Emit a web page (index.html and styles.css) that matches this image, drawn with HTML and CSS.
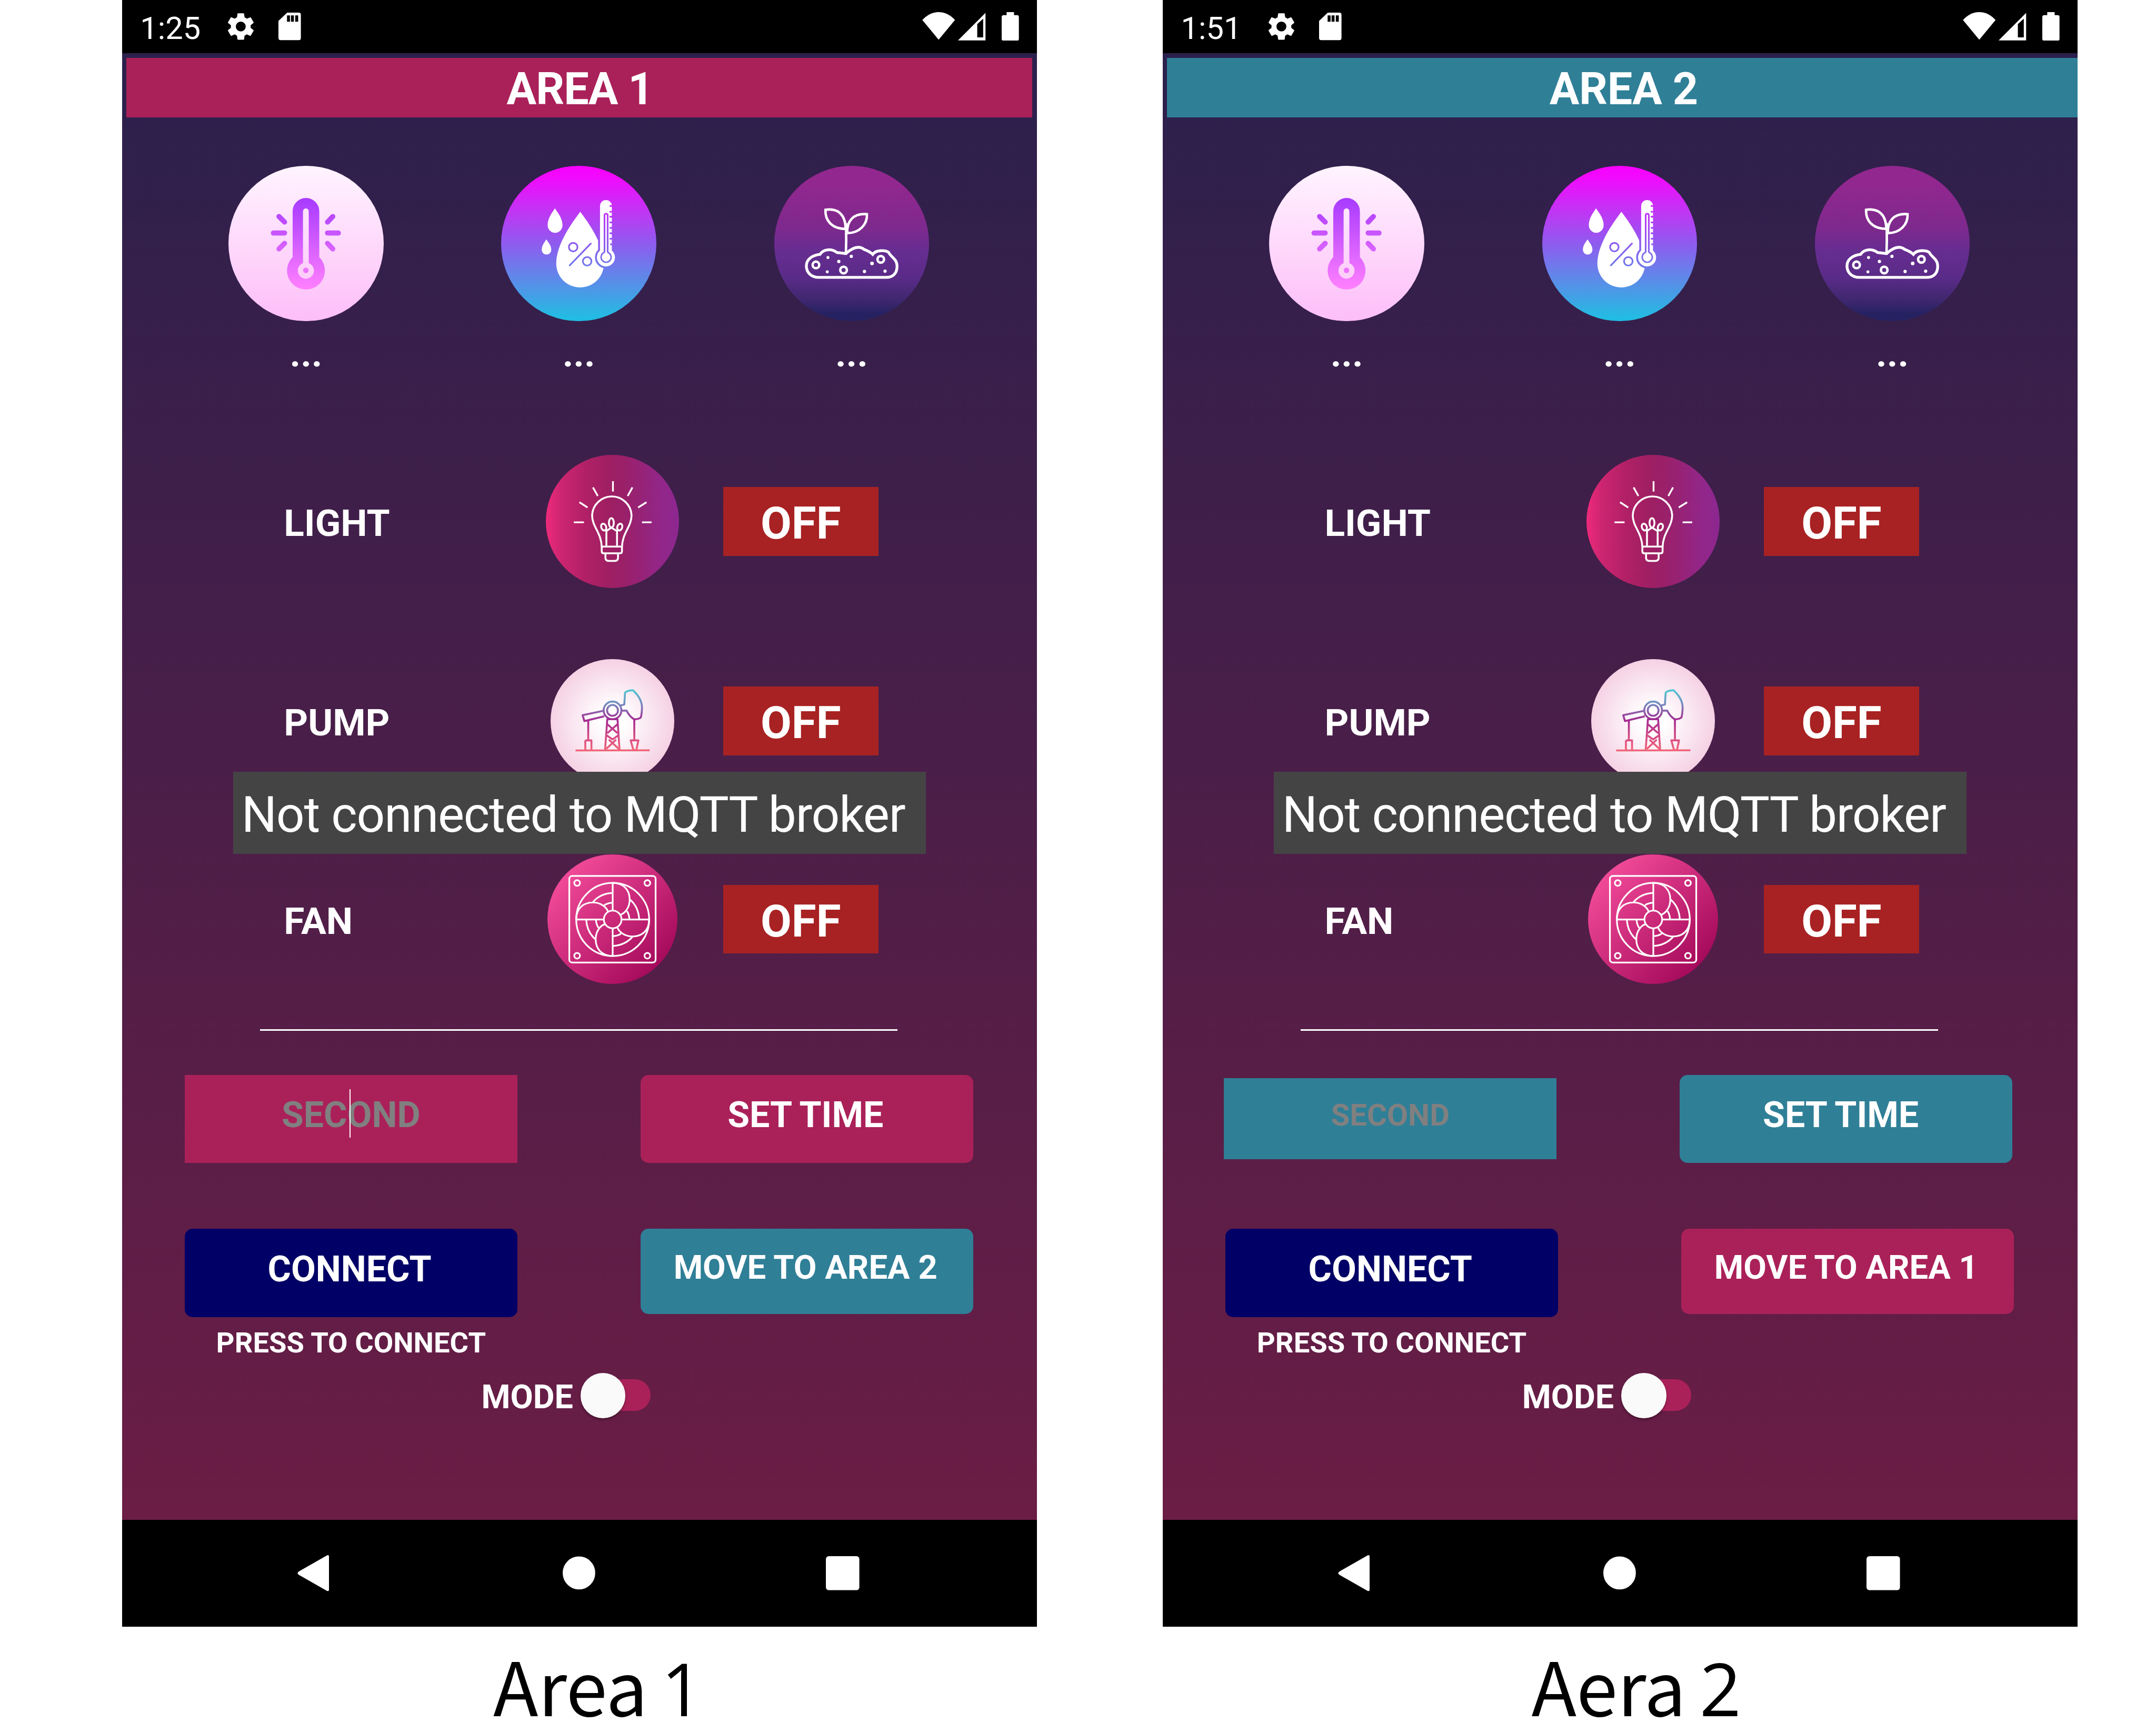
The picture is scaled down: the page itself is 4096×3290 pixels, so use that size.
FILE: index.html
```html
<!DOCTYPE html>
<html lang="en">
<head>
<meta charset="utf-8">
<title>Garden control</title>
<link rel="stylesheet" href="styles.css">
</head>
<body>
<svg class="defs" aria-hidden="true">
  <defs>
    <linearGradient id="heat" gradientUnits="userSpaceOnUse" x1="0" y1="243" x2="0" y2="795"><stop offset="0" stop-color="#a73aff"/><stop offset="1" stop-color="#ff80ff"/></linearGradient>
    <linearGradient id="rig" gradientUnits="userSpaceOnUse" x1="0" y1="190" x2="0" y2="456"><stop offset="0" stop-color="#4fc8d2"/><stop offset=".25" stop-color="#7b86bd"/><stop offset=".5" stop-color="#a42a90"/><stop offset=".8" stop-color="#d94f84"/><stop offset="1" stop-color="#f06478"/></linearGradient>
    <mask id="humid-cut" maskUnits="userSpaceOnUse" x="48" y="47" width="940" height="942">
      <rect x="48" y="47" width="940" height="942" fill="#fff"/>
      <g fill="none" stroke="#000" stroke-width="10">
        <circle cx="485" cy="541" r="26"/><circle cx="570" cy="627" r="26"/>
        <path d="M464 652 592 519" stroke-linecap="round"/>
      </g>
      <path d="M648 562V291a36 36 0 0 1 72 0V562A55 55 0 1 1 648 562z" fill="#000" stroke="#000" stroke-width="23"/>
    </mask>
    <mask id="gauge-cut" maskUnits="userSpaceOnUse" x="48" y="47" width="940" height="942">
      <rect x="48" y="47" width="940" height="942" fill="#fff"/>
      <path d="M675.5 573V347q0-9 9.500-9t9.500 9V573" fill="none" stroke="#000" stroke-width="10"/>
      <path d="M675.5 573A30.500 30.500 0 1 0 694.500 573" fill="none" stroke="#000" stroke-width="9"/>
      <path d="M706 291h20M706 326h20M706 356h20M706 391h20M706 424h20M706 457h20M706 490h20M710 524h16" stroke="#000" stroke-width="10"/>
    </mask>
  </defs>
  <symbol id="i-heat" viewBox="70 47 942 942">
    <path fill="url(#heat)" fill-rule="evenodd" d="M460 602V323a81 81 0 0 1 162 0V602A115 115 0 1 1 460 602zM523 638V323a17.500 17.500 0 0 1 35 0V638a49 49 0 1 1-35 0z"/>
    <circle cx="540.5" cy="682" r="16.500" fill="#ee72ff"/>
    <path fill="none" stroke="url(#heat)" stroke-width="31" stroke-linecap="round" d="M343 455.500 411 455M377 355 411 389M377 552 411 518M738 455.500 672 455M704 355 672 389M704 552 672 518"/>
  </symbol>
  <symbol id="i-humid" viewBox="48 47 940 942">
    <g fill="#fff">
      <path d="M374 305C397 340 420 366 420 408A45 46 0 0 1 330 408C330 366 351 340 374 305z"/>
      <path d="M322 494C337 516 352 532 352 558A29 28 0 0 1 294 558C294 532 307 516 322 494z"/>
      <path mask="url(#humid-cut)" d="M528 326C572 385 672 520 672 641A145 145 0 0 1 382 641C382 520 484 385 528 326z"/>
      <path mask="url(#gauge-cut)" d="M648 562V291a36 36 0 0 1 72 0V562A55 55 0 1 1 648 562z"/>
    </g>
  </symbol>
  <symbol id="i-soil" viewBox="54 47 942 942">
    <g fill="none" stroke="#fff" stroke-width="15">
      <path d="M365 314C362 378 402 430 488 430C486 340 440 304 365 314z"/>
      <path d="M617 341C620 405 570 456 497 456C495 385 530 334 617 341z"/>
      <path d="M490 395 491 500 489 585"/>
      <path stroke-width="17" d="M325 725C275 725 249 692 249 655C249 615 285 590 332 585C352 552 402 548 435 574L490 580C525 548 565 528 600 555Q635 568 652 585C672 555 730 560 748 572C765 605 800 612 800 657C800 700 775 725 735 725z"/>
      <circle cx="307" cy="649" r="20"/><circle cx="475" cy="680" r="20"/><circle cx="701" cy="615" r="20"/>
    </g>
    <g fill="#fff"><circle cx="380" cy="604" r="9"/><circle cx="446" cy="628" r="10"/><circle cx="522" cy="597" r="10"/><circle cx="648" cy="640" r="11"/><circle cx="376" cy="691" r="9"/><circle cx="602" cy="689" r="10"/><circle cx="727" cy="687" r="10"/></g>
  </symbol>
  <symbol id="i-bulb" viewBox="24.800 20.700 270 270">
    <g fill="none" stroke="#fff" stroke-width="3.800" stroke-linejoin="round">
      <path d="M138 207C137 178 118.500 166 118.500 143A40 40 0 0 1 198.400 143C198.400 166 180 178 179 207"/>
      <path d="M138 206.500H179V216q0 4-4 4h-33q-4 0-4-4z"/>
      <path d="M145.500 221v8q0 6.500 6.500 6.500h12.500q6.500 0 6.500-6.500v-8"/>
      <path d="M147.400 205V174M169 205V174M147.400 175 157.500 168 169 175"/>
      <ellipse cx="157.500" cy="158.500" rx="5" ry="9.500"/>
      <ellipse cx="142" cy="167" rx="5" ry="7" transform="rotate(-20 142 167)"/>
      <ellipse cx="174.500" cy="167" rx="5" ry="7" transform="rotate(20 174.500 167)"/>
    </g>
    <path fill="none" stroke="#fff" stroke-width="3.600" d="M160.700 74V95M120.300 86.700 130 104M200.200 86.700 190.600 104M92.800 116.700 109.300 127.300M228.700 116.700 211.700 127.300M81.500 157.300H102M219.500 157.300H239"/>
  </symbol>
  <symbol id="i-pump" viewBox="77 54 544 544">
    <g fill="none" stroke="url(#rig)" stroke-width="8.500" stroke-linejoin="round">
      <path d="M187 456.500 514 456"/>
      <circle cx="350" cy="280" r="39"/><circle cx="350" cy="280" r="24"/>
      <path d="M309 282 218 301 226 327 313 306"/>
      <path d="M385 258 402 254 405 203Q412 192 440 191Q480 228 480 268Q479 300 474 312Q458 322 443 318Q424 305 412 281L389 281"/>
      <path d="M243 325 242.900 412M446 320 446.100 412M230 412H257V455M230 412V455M430 412H464L455 455H442z"/>
      <path d="M317 455 327 319H372L381 455"/>
      <path d="M326 340 372 380M373 340 327 380M324 390 350 408 376 390M322 450 366 409M378 450 334 409"/>
    </g>
  </symbol>
  <symbol id="i-fan" viewBox="62 916 573 572">
    <g fill="none" stroke="#fff" stroke-width="7.500">
      <rect x="158.500" y="1011" width="381" height="382" rx="13"/>
      <circle cx="193" cy="1042" r="12.500"/><circle cx="503" cy="1042" r="12.500"/><circle cx="193" cy="1363" r="12.500"/><circle cx="503" cy="1363" r="12.500"/>
      <circle cx="350" cy="1203" r="161"/><circle cx="350" cy="1203" r="39"/>
      <path id="blade" d="M350 1164V1042C400 1042 425 1075 425 1115C425 1150 405 1177 382 1183M427 1116Q464 1148 467 1203M413 1166Q423 1182 424 1203"/>
      <use href="#blade" transform="rotate(90 350 1203)"/><use href="#blade" transform="rotate(180 350 1203)"/><use href="#blade" transform="rotate(270 350 1203)"/>
    </g>
  </symbol>
  <symbol id="i-gear" viewBox="0 0 24 24">
    <path fill="#fff" d="M19.140 12.940c.04-.3.060-.61.060-.94 0-.32-.02-.64-.07-.94l2.030-1.580c.18-.14.230-.41.120-.61l-1.920-3.320c-.12-.22-.37-.29-.59-.22l-2.390.96c-.5-.38-1.030-.7-1.620-.94l-.36-2.540c-.04-.24-.24-.41-.48-.41h-3.840c-.24 0-.43.170-.47.410l-.36 2.540c-.59.240-1.130.570-1.620.940l-2.390-.96c-.22-.08-.47 0-.59.220L2.740 8.870c-.12.210-.08.470.120.610l2.030 1.580c-.05.3-.09.630-.09.940s.020.640.070.940l-2.030 1.580c-.18.140-.23.410-.12.610l1.920 3.320c.12.220.370.290.590.220l2.390-.96c.5.380 1.030.7 1.620.940l.36 2.540c.05.240.240.410.480.410h3.840c.24 0 .44-.17.470-.41l.36-2.540c.59-.24 1.130-.56 1.620-.94l2.390.96c.22.080.470 0 .590-.22l1.920-3.320c.12-.22.070-.47-.12-.61zM12 15.600A3.600 3.600 0 1 1 12 8.400a3.600 3.600 0 0 1 0 7.200z"/>
  </symbol>
  <symbol id="i-sd" viewBox="965 78 137 168">
    <path fill="#fff" fill-rule="evenodd" d="M1018 78H1088q14 0 14 14V232q0 14-14 14H979q-14 0-14-14V128zM1017 95v38h18V95zM1041 95v38h18V95zM1067 95v38h18V95z"/>
  </symbol>
  <symbol id="i-wifi" viewBox="0 0 66 56"><path fill="#fff" d="M0 16C9 6 20 0 33 0S57 6 66 16L33 56z"/></symbol>
  <symbol id="i-signal" viewBox="0 0 56 56"><path fill="#fff" fill-rule="evenodd" d="M0 56 56 0V56zM39 23V50H51V12z"/></symbol>
  <symbol id="i-battery" viewBox="0 0 35 58"><path fill="#fff" d="M10 0H25V6H31q4 0 4 4V54q0 4-4 4H4q-4 0-4-4V10q0-4 4-4H10z"/></symbol>
  <symbol id="i-back" viewBox="0 0 64 73"><path fill="#fff" d="M60 .5Q64-1 64 3V70Q64 74 60 72.500L3 40Q-2 36.500 3 33z"/></symbol>
  <symbol id="i-home" viewBox="0 0 66 68"><ellipse fill="#fff" cx="33" cy="34" rx="33" ry="33.500"/></symbol>
  <symbol id="i-recent" viewBox="0 0 68 69"><rect fill="#fff" width="68" height="69" rx="6"/></symbol>
</svg>

<main class="board">
  <figure class="device area-1">
    <div class="phone">
      <div class="status">
        <span class="clock">1:25</span>
        <svg class="gear"><use href="#i-gear"/></svg>
        <svg class="sd"><use href="#i-sd"/></svg>
        <svg class="wifi"><use href="#i-wifi"/></svg>
        <svg class="signal"><use href="#i-signal"/></svg>
        <svg class="battery"><use href="#i-battery"/></svg>
      </div>
      <div class="screen">
        <h1 class="title">AREA 1</h1>
        <div class="sensors">
          <div class="sensor"><svg class="disc heat"><use href="#i-heat"/></svg><span class="reading">...</span></div>
          <div class="sensor"><svg class="disc humid"><use href="#i-humid"/></svg><span class="reading">...</span></div>
          <div class="sensor"><svg class="disc soil"><use href="#i-soil"/></svg><span class="reading">...</span></div>
        </div>
        <div class="row light"><span class="label">LIGHT</span><svg class="disc"><use href="#i-bulb"/></svg><button class="off">OFF</button></div>
        <div class="row pump"><span class="label">PUMP</span><svg class="disc"><use href="#i-pump"/></svg><button class="off">OFF</button></div>
        <div class="row fan"><span class="label">FAN</span><svg class="disc"><use href="#i-fan"/></svg><button class="off">OFF</button></div>
        <div class="rule"></div>
        <div class="actions time">
          <div class="field">SECOND<i class="caret"></i></div>
          <button class="btn set">SET TIME</button>
        </div>
        <div class="actions links">
          <div class="link"><button class="btn connect">CONNECT</button><span class="hint">PRESS TO CONNECT</span></div>
          <button class="btn move">MOVE TO AREA 2</button>
        </div>
        <div class="mode"><span class="mode-label">MODE</span><span class="switch"></span></div>
        <div class="toast">Not connected to MQTT broker</div>
      </div>
      <div class="nav"><svg class="back"><use href="#i-back"/></svg><svg class="home"><use href="#i-home"/></svg><svg class="recent"><use href="#i-recent"/></svg></div>
    </div>
    <figcaption class="caption">Area <span class="num">1</span></figcaption>
  </figure>

  <figure class="device area-2">
    <div class="phone">
      <div class="status">
        <span class="clock">1:51</span>
        <svg class="gear"><use href="#i-gear"/></svg>
        <svg class="sd"><use href="#i-sd"/></svg>
        <svg class="wifi"><use href="#i-wifi"/></svg>
        <svg class="signal"><use href="#i-signal"/></svg>
        <svg class="battery"><use href="#i-battery"/></svg>
      </div>
      <div class="screen">
        <h1 class="title">AREA 2</h1>
        <div class="sensors">
          <div class="sensor"><svg class="disc heat"><use href="#i-heat"/></svg><span class="reading">...</span></div>
          <div class="sensor"><svg class="disc humid"><use href="#i-humid"/></svg><span class="reading">...</span></div>
          <div class="sensor"><svg class="disc soil"><use href="#i-soil"/></svg><span class="reading">...</span></div>
        </div>
        <div class="row light"><span class="label">LIGHT</span><svg class="disc"><use href="#i-bulb"/></svg><button class="off">OFF</button></div>
        <div class="row pump"><span class="label">PUMP</span><svg class="disc"><use href="#i-pump"/></svg><button class="off">OFF</button></div>
        <div class="row fan"><span class="label">FAN</span><svg class="disc"><use href="#i-fan"/></svg><button class="off">OFF</button></div>
        <div class="rule"></div>
        <div class="actions time">
          <div class="field">SECOND</div>
          <button class="btn set">SET TIME</button>
        </div>
        <div class="actions links">
          <div class="link"><button class="btn connect">CONNECT</button><span class="hint">PRESS TO CONNECT</span></div>
          <button class="btn move">MOVE TO AREA 1</button>
        </div>
        <div class="mode"><span class="mode-label">MODE</span><span class="switch"></span></div>
        <div class="toast">Not connected to MQTT broker</div>
      </div>
      <div class="nav"><svg class="back"><use href="#i-back"/></svg><svg class="home"><use href="#i-home"/></svg><svg class="recent"><use href="#i-recent"/></svg></div>
    </div>
    <figcaption class="caption">Aera <span class="num">2</span></figcaption>
  </figure>
</main>
</body>
</html>
```
FILE: styles.css
```css
:root { --pink: #aa2159; --teal: #2f7f97; --navy: #000066; --red: #a82223; }
* { box-sizing: border-box; margin: 0; }
html { font-size: 9.3794px; }
body { height: 100vh; overflow: hidden; background: #fff; font-family: Roboto, "Liberation Sans", sans-serif; color: #fff; }
svg { display: block; flex: none; }
.defs { position: absolute; width: 0; height: 0; }
button { border: 0; padding: 0; color: inherit; font: inherit; font-weight: 700; }

.board { display: flex; gap: 25.5rem; padding-left: 24.7rem; }
.device { width: 185.3rem; flex: none; }
.phone { height: 329.4rem; display: flex; flex-direction: column; background: #000; }

.status { height: 10.8rem; padding: 0 3.6rem 0 3.7rem; display: flex; align-items: center; flex: none; }
.clock { width: 17rem; font-size: 6.35rem; line-height: 1; padding-top: .8rem; }
.gear { width: 6.7rem; height: 6.7rem; }
.sd { width: 4.56rem; height: 5.6rem; margin-left: 4.3rem; }
.wifi { width: 6.66rem; height: 5.6rem; margin-left: auto; margin-top: -.4rem; }
.signal { width: 5.6rem; height: 5.65rem; margin-left: .6rem; margin-top: -.1rem; }
.battery { width: 3.5rem; height: 5.8rem; margin-left: 3.25rem; margin-top: -.2rem; }

.screen { position: relative; height: 297rem; flex: none; display: flex; flex-direction: column; background: linear-gradient(#2b204c, #6b1d45); }
.title { height: 12.1rem; margin: .9rem .9rem 0; padding: .9rem 0 0 .2rem; flex: none; display: flex; align-items: center; justify-content: center; background: var(--pink); font-size: 9rem; letter-spacing: -.11rem; line-height: 1; font-weight: 700; }
.area-2 .title { background: var(--teal); margin-right: 0; padding-left: .6rem; letter-spacing: -.04rem; }

.sensors { display: flex; justify-content: space-between; margin: 9.8rem 21.8rem 0 21.6rem; }
.sensor { display: flex; flex-direction: column; align-items: center; }
.disc { border-radius: 50%; }
.sensor .disc { width: 31.4rem; height: 31.4rem; }
.heat { background: linear-gradient(#fff4ff, #fdbef8); }
.humid { background: linear-gradient(#f800ff, #f00bfd 8%, #c433f5 28%, #8f5bef 50%, #5f88e9 72%, #22bce2 98%); }
.soil { background: linear-gradient(#92278f 10%, #7e298d 40%, #662d91 55%, #5a2b88 72%, #40276f 86%, #262262 95%); }
.reading { margin-top: 2.8rem; font-size: 7.6rem; line-height: 1; font-weight: 700; }

.row { display: grid; grid-template-columns: 53.05rem 27rem 31.4rem; align-items: center; padding-left: 32.8rem; flex: none; }
.row .disc { justify-self: center; }
.label { font-size: 7.6rem; line-height: 1; font-weight: 700; padding-top: .7rem; }
.off { margin-left: 8.95rem; width: 31.4rem; height: 13.9rem; padding-top: .9rem; background: var(--red); font-size: 9.1rem; line-height: 1; }
.light { margin-top: 16.7rem; height: 27rem; }
.light .disc { width: 27rem; height: 27rem; background: linear-gradient(90deg, #ee2a7b, #cc2570 12%, #b12066 30%, #9e1f63 48%, #9a2068 58%, #92268a 88%, #8c2790); }
.pump { margin-top: 14.4rem; height: 25rem; }
.pump .disc { width: 25rem; height: 25rem; background: radial-gradient(circle closest-side, #fff 20%, #f5d1e4); }
.fan { margin-top: 14.55rem; height: 26.25rem; }
.fan .disc { width: 26.3rem; height: 26.25rem; background: linear-gradient(135deg, #f14a99 14%, #a4095a 87%); }

.rule { height: .4rem; margin: 9.1rem 28.2rem 0 28rem; background: #fff; flex: none; }

.actions { display: grid; grid-template-columns: 67.4rem 67.4rem; column-gap: 24.95rem; align-items: start; padding-left: 12.7rem; flex: none; }
.btn, .field { width: 67.4rem; display: flex; align-items: center; justify-content: center; font-size: 7.25rem; line-height: 1; font-weight: 700; padding-bottom: 1.5rem; }
.btn { border-radius: 1.6rem; padding-right: .6rem; }
.time { margin-top: 8.9rem; height: 17.8rem; }
.field { position: relative; height: 17.8rem; background: var(--pink); color: #808080; }
.caret { position: absolute; left: 33.4rem; top: 2.9rem; width: .25rem; height: 9.8rem; background: #fff; }
.set { height: 17.8rem; background: var(--pink); }
.area-2 .time { padding-left: 12.4rem; }
.area-2 .set { background: var(--teal); padding-right: 2.2rem; }
.area-2 .field { height: 16.4rem; margin-top: .7rem; background: var(--teal); font-size: 6.2rem; }
.links { margin-top: 13.4rem; height: 23.1rem; }
.link { display: flex; flex-direction: column; align-items: center; }
.connect { height: 17.9rem; background: var(--navy); }
.move { height: 17.2rem; background: var(--teal); font-size: 6.76rem; }
.area-2 .move { background: var(--pink); }
.hint { margin-top: 2.3rem; font-size: 5.8rem; line-height: 1; font-weight: 700; white-space: nowrap; }

.mode { margin-top: 6.1rem; height: 9rem; padding-left: 72.8rem; display: flex; align-items: center; flex: none; }
.mode-label { width: 21.5rem; font-size: 6.7rem; line-height: 1; font-weight: 700; padding-top: .8rem; }
.switch { position: relative; width: 12.8rem; height: 6.4rem; border-radius: 3.2rem; background: var(--pink); }
.switch::before { content: ""; position: absolute; left: -1.4rem; top: -1.3rem; width: 9.1rem; height: 9.1rem; border-radius: 50%; background: #fafafa; box-shadow: 0 .3rem .5rem rgba(0, 0, 0, .35); }

.toast { position: absolute; left: 22.5rem; top: 145.5rem; width: 140.3rem; height: 16.6rem; padding: .9rem 0 0 1.7rem; display: flex; align-items: center; background: #444; font-size: 10.07rem; letter-spacing: -.13rem; line-height: 1; white-space: nowrap; }

.nav { flex: 1; display: flex; align-items: center; padding-left: 35.5rem; }
.back { width: 6.4rem; height: 7.3rem; }
.home { width: 6.6rem; height: 6.8rem; margin-left: 47.4rem; }
.recent { width: 6.8rem; height: 6.9rem; margin-left: 46.7rem; }

.caption { padding: 2.7rem 0 0 75.2rem; color: #000; font-family: "Noto Sans CJK SC", "Open Sans", sans-serif; font-size: 15rem; line-height: 18rem; white-space: nowrap; }
.area-2 .caption { padding-left: 74.7rem; }
.num { font-family: "Open Sans", "Noto Sans", sans-serif; font-size: 14.8rem; margin-left: -.6rem; }
```
